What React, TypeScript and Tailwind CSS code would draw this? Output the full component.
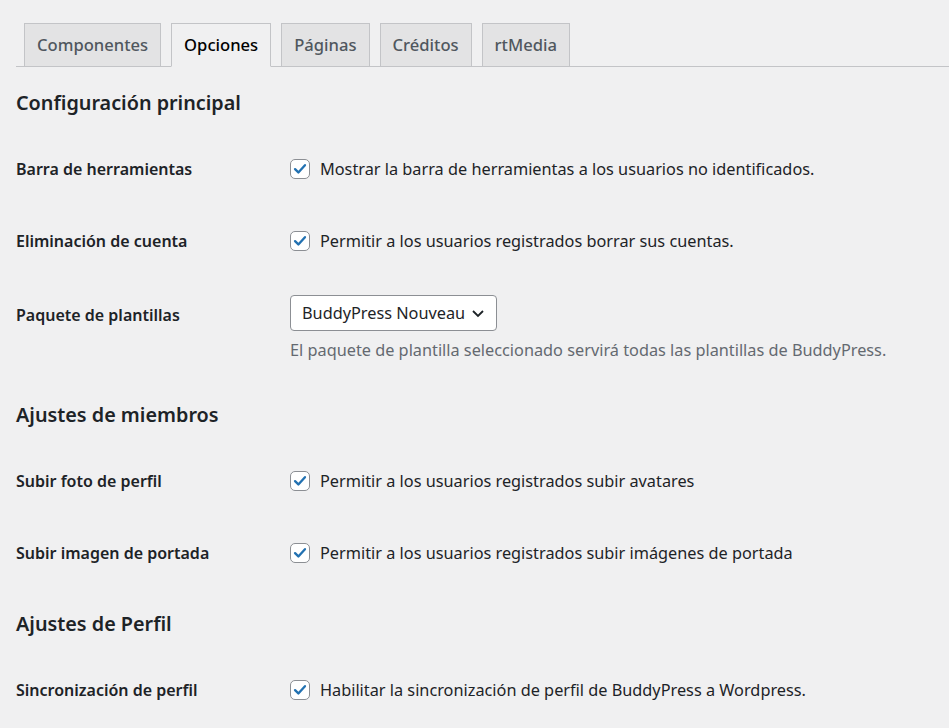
const tabs = ["Componentes", "Opciones", "Páginas", "Créditos", "rtMedia"];

const Checkbox = () => (
  <span className="flex h-5 w-5 shrink-0 items-center justify-center rounded-[5px] border border-[#8c8f94] bg-white">
    <svg viewBox="0 0 20 20" className="h-[18px] w-[18px]">
      <path d="M4.5 10.2 L8.2 13.8 L15.5 5.8" fill="none" stroke="#2271b1" strokeWidth="2.6" strokeLinecap="round" strokeLinejoin="round" />
    </svg>
  </span>
);

const Row = ({ label, text }: { label: string; text: string }) => (
  <div className="grid grid-cols-[274px_1fr] h-[72px] items-center">
    <div className="text-[16px] font-semibold">{label}</div>
    <label className="flex items-center gap-[10px]">
      <Checkbox />
      <span>{text}</span>
    </label>
  </div>
);

const Heading = ({ children, first }: { children: string; first?: boolean }) => (
  <h2 className={`${first ? "mt-[21px]" : "mt-[20px]"} mb-[16px] h-[29px] text-[19.8px] leading-[29px] font-semibold`}>{children}</h2>
);

export default function App() {
  return (
    <div className="min-h-screen bg-[#f0f0f1] text-[#1d2327] text-[16.3px] leading-[22px] pt-[23px] pl-4" style={{ fontFamily: '"Noto Sans", sans-serif' }}>
      <div className="flex gap-[10px] border-b border-[#c3c4c7] pl-2">
        {tabs.map((t) => (
          <div
            key={t}
            className={
              t === "Opciones"
                ? "-mb-px h-[44px] border border-[#c3c4c7] border-b-[#f0f0f1] bg-[#f0f0f1] px-[12px] text-[16.6px] leading-[42px] font-medium text-black"
                : "h-[43px] border border-b-0 border-[#c3c4c7] bg-[#e3e3e4] px-[12px] text-[16.6px] leading-[42px] font-medium text-[#50575e]"
            }
          >
            {t}
          </div>
        ))}
      </div>

      <Heading first>Configuración principal</Heading>
      <Row label="Barra de herramientas" text="Mostrar la barra de herramientas a los usuarios no identificados." />
      <Row label="Eliminación de cuenta" text="Permitir a los usuarios registrados borrar sus cuentas." />
      <div className="grid grid-cols-[274px_1fr] pt-[18px] pb-[19px]">
        <div className="pt-[9px] text-[16px] font-semibold">Paquete de plantillas</div>
        <div>
          <div className="flex h-[36px] w-[207px] items-center justify-between rounded-[4px] border border-[#8c8f94] bg-white pl-[11px] pr-[10px]">
            <span>BuddyPress Nouveau</span>
            <svg viewBox="0 0 16 16" className="h-4 w-4">
              <path d="M3 6 L8 11 L13 6" fill="none" stroke="#1d2327" strokeWidth="1.8" />
            </svg>
          </div>
          <p className="mt-[8px] text-[#646970]">El paquete de plantilla seleccionado servirá todas las plantillas de BuddyPress.</p>
        </div>
      </div>

      <Heading>Ajustes de miembros</Heading>
      <Row label="Subir foto de perfil" text="Permitir a los usuarios registrados subir avatares" />
      <Row label="Subir imagen de portada" text="Permitir a los usuarios registrados subir imágenes de portada" />

      <Heading>Ajustes de Perfil</Heading>
      <Row label="Sincronización de perfil" text="Habilitar la sincronización de perfil de BuddyPress a Wordpress." />
    </div>
  );
}
